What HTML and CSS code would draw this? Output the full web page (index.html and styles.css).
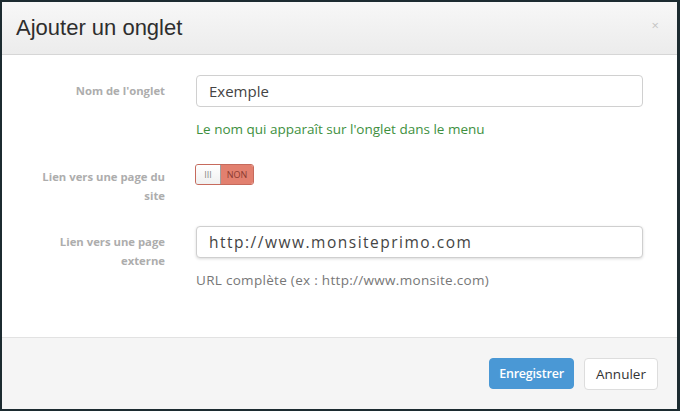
FILE: index.html
```html
<!DOCTYPE html>
<html lang="fr">
<head>
  <meta charset="UTF-8">
  <title>Ajouter un onglet</title>
  <link rel="stylesheet" href="styles.css">
</head>
<body>
  <div class="modal">
    <div class="modal-header">
      <h3>Ajouter un onglet</h3>
      <span class="close">&times;</span>
    </div>

    <form class="modal-body">
      <div class="row">
        <label class="label">Nom de l'onglet</label>
        <div class="control">
          <input type="text" class="field" value="Exemple">
          <p class="help help-ok">Le nom qui apparaît sur l'onglet dans le menu</p>
        </div>
      </div>

      <div class="row row-switch">
        <label class="label">Lien vers une page du site</label>
        <div class="control">
          <div class="switch">
            <span class="switch-handle">III</span>
            <span class="switch-off">NON</span>
          </div>
        </div>
      </div>

      <div class="row">
        <label class="label">Lien vers une page externe</label>
        <div class="control">
          <input type="text" class="field field-url" value="http://www.monsiteprimo.com">
          <p class="help help-url">URL complète (ex : http://www.monsite.com)</p>
        </div>
      </div>
    </form>

    <div class="modal-footer">
      <button class="btn btn-primary">Enregistrer</button>
      <button class="btn">Annuler</button>
    </div>
  </div>
</body>
</html>
```

FILE: styles.css
```css
html, body {
  margin: 0;
  height: 100%;
}
body {
  background: #1c2b30;
  font-family: "Open Sans", Arial, sans-serif;
  padding: 2px 3px 2px 2px;
  box-sizing: border-box;
}
.modal {
  background: #fff;
  height: 100%;
  display: flex;
  flex-direction: column;
}
.modal-header {
  height: 52px;
  border-bottom: 1px solid #d6d6d6;
  background: linear-gradient(#f7f7f7, #ececec);
  display: flex;
  align-items: center;
  justify-content: space-between;
  padding: 0 18px 0 14px;
}
.modal-header h3 {
  margin: 0;
  font-family: "Liberation Sans", Arial, sans-serif;
  font-weight: normal;
  font-size: 22px;
  color: #2e2e2e;
}
.close {
  color: #c4c4c4;
  font-size: 13px;
  margin-top: -6px;
}
.modal-body {
  flex: 1;
  padding: 20px 34px 0 38px;
}
.row {
  display: grid;
  grid-template-columns: 125px 1fr;
  column-gap: 31px;
}
.label {
  text-align: right;
  font-size: 11.3px;
  font-weight: bold;
  color: #adadad;
  line-height: 19px;
  padding-top: 6px;
}
.field {
  display: block;
  width: 100%;
  box-sizing: border-box;
  height: 32px;
  border: 1px solid #d0d0d0;
  border-radius: 4px;
  padding: 0 12px;
  font-family: "Open Sans", Arial, sans-serif;
  font-size: 15px;
  color: #444;
  outline: none;
}
.field-url {
  border-color: #cfcfcf;
  box-shadow: 0 1px 3px rgba(0, 0, 0, 0.15);
  font-size: 15.5px;
  letter-spacing: 1.5px;
}
.help {
  margin: 12px 0 0;
  font-size: 13.5px;
  color: #777;
  line-height: 20px;
}
.help-ok {
  color: #3e8f3e;
}
.help-url {
  letter-spacing: 0.3px;
}
.row-switch {
  margin-top: 22px;
  height: 65px;
}
.switch {
  display: inline-flex;
  height: 19px;
  border: 1px solid #c66a5c;
  border-radius: 3px;
  overflow: hidden;
  font-size: 9px;
  line-height: 19px;
  margin-left: -1px;
}
.switch-handle {
  width: 26px;
  text-align: center;
  color: #888;
  background: linear-gradient(#fff, #f0f0f0);
  border: 1px solid #a0a0a0;
  border-radius: 3px 0 0 3px;
  margin: -1px 0 -1px -1px;
  box-sizing: border-box;
  line-height: 19px;
}
.switch-off {
  width: 32px;
  text-align: center;
  color: #8a3a30;
  background: #e2806f;
}
.modal-footer {
  height: 71px;
  border-top: 1px solid #e2e2e2;
  background: #f5f5f5;
  display: flex;
  align-items: center;
  justify-content: flex-end;
  gap: 10px;
  padding: 0 19px 0 0;
}
.btn {
  font-family: "Open Sans", Arial, sans-serif;
  font-size: 13.5px;
  height: 32px;
  width: 74px;
  padding: 0;
  border: 1px solid #ddd;
  border-radius: 4px;
  background: #fff;
  color: #333;
}
.btn-primary {
  background: #4a98d5;
  border-color: #4a98d5;
  color: #fff;
  font-size: 12.5px;
  font-weight: 600;
  letter-spacing: -0.2px;
  width: 85px;
  height: 31px;
}
```
